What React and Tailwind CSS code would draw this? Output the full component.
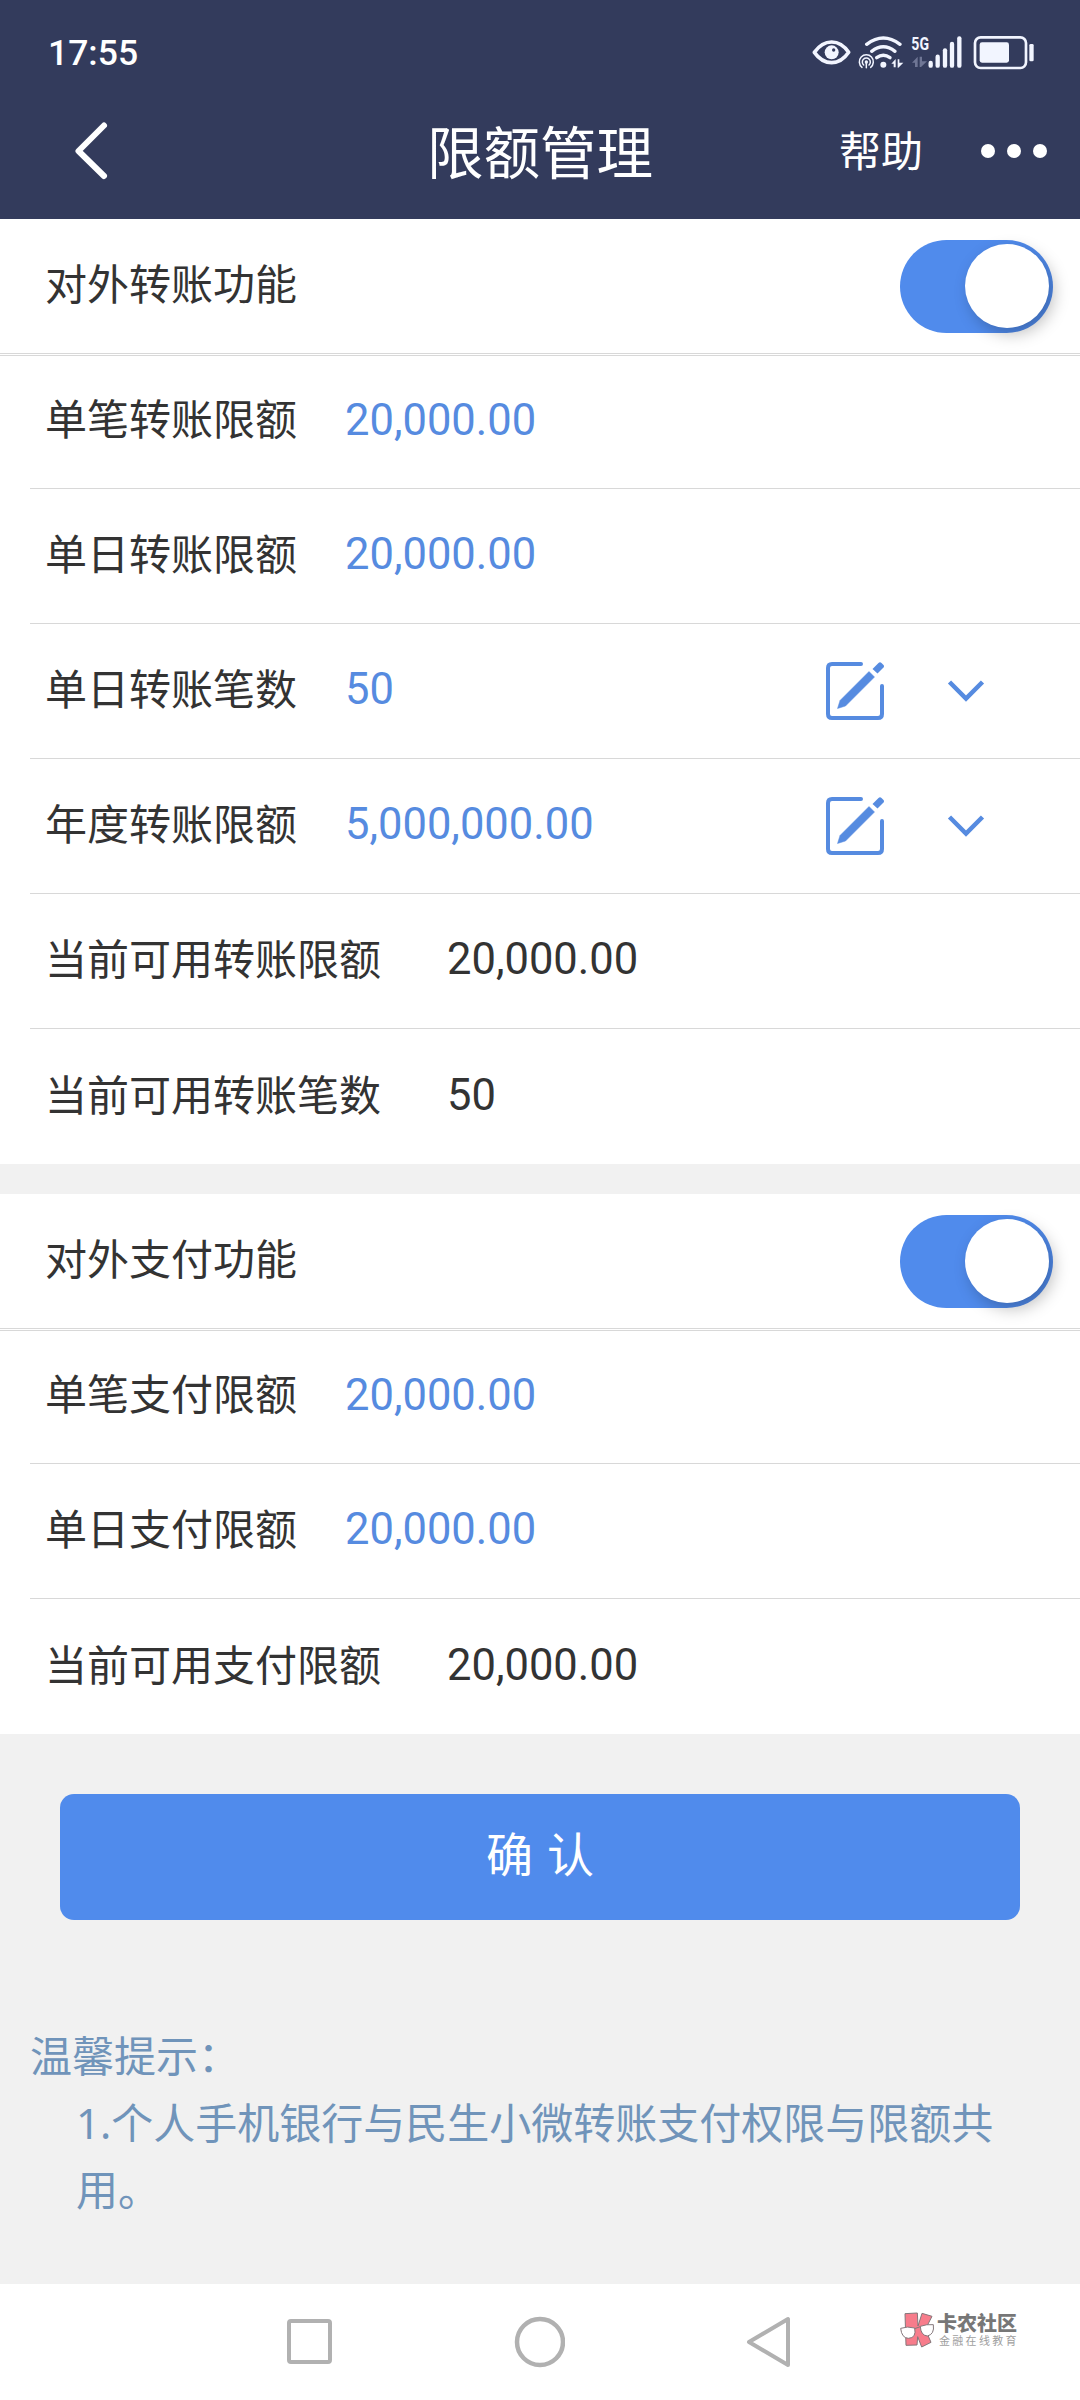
import { useState } from "react";

const transferRows = [
  { label: "单笔转账限额", value: "20,000.00" },
  { label: "单日转账限额", value: "20,000.00" },
  { label: "单日转账笔数", value: "50", editable: true },
  { label: "年度转账限额", value: "5,000,000.00", editable: true },
  { label: "当前可用转账限额", value: "20,000.00", readOnly: true },
  { label: "当前可用转账笔数", value: "50", readOnly: true },
];

const paymentRows = [
  { label: "单笔支付限额", value: "20,000.00" },
  { label: "单日支付限额", value: "20,000.00" },
  { label: "当前可用支付限额", value: "20,000.00", readOnly: true },
];

function StatusIcons() {
  return (
    <svg className="h-10 w-[228px]" viewBox="90 96 684 120" fill="none" stroke="#f2f5ff">
      {/* eye */}
      <path d="M103 157 Q125 126 155 126 Q185 126 206 157 Q185 188 155 188 Q125 188 103 157Z" strokeWidth="11" strokeLinejoin="round" />
      <circle cx="155" cy="157" r="21" fill="#f2f5ff" stroke="none" />
      <circle cx="161" cy="150" r="5" fill="#333b5c" stroke="none" />
      {/* wifi + hotspot */}
      <g strokeLinecap="round" strokeWidth="10">
        <path d="M260 133 Q310 95 360 133" />
        <path d="M275 154 Q310 127 345 154" />
        <path d="M290 173 Q310 158 330 173" />
      </g>
      <circle cx="310" cy="194" r="9" fill="#f2f5ff" stroke="none" />
      <g strokeWidth="4.5" strokeLinecap="round">
        <path d="M246 202 A21 21 0 1 1 272 202" />
        <path d="M251 195 A12 12 0 1 1 267 195" />
        <path d="M259 190 V203" />
      </g>
      <circle cx="259" cy="186" r="5" fill="#f2f5ff" stroke="none" />
      <path d="M334 191 L347 177 V202 H341 V191Z M353 178 H358 V188 H370 L355 203 H353Z" fill="#f2f5ff" stroke="none" />
      {/* mobile signal */}
      <text x="394" y="151" fill="#f2f5ff" stroke="none" fontSize="56" fontWeight="700" textLength="53" lengthAdjust="spacingAndGlyphs" fontFamily="Roboto, sans-serif">5G</text>
      <path d="M396 188 L413 170 V201 H405 V188Z M419 170 H426 V184 H441 L423 201 H419Z" fill="#6f7695" stroke="none" />
      <g strokeWidth="13" strokeLinecap="round">
        <path d="M452 189 V197" />
        <path d="M473 170 V197" />
        <path d="M495 151 V197" />
        <path d="M516 132 V197" />
        <path d="M538 115 V197" />
      </g>
      {/* battery */}
      <rect x="585" y="112" width="153" height="92" rx="17" strokeWidth="8" />
      <rect x="599" y="127" width="88" height="61" rx="7" fill="#f2f5ff" stroke="none" />
      <rect x="748" y="132" width="13" height="52" rx="4" fill="#f2f5ff" stroke="none" />
    </svg>
  );
}

function EditIcon() {
  return (
    <svg className="size-[58px]" viewBox="0 0 58 58" fill="none" stroke="#568be0">
      <path d="M35 2 H6 Q2 2 2 6 V52 Q2 56 6 56 H52 Q56 56 56 52 V24" strokeWidth="4" strokeLinecap="round" />
      <path d="M11.5 46.5 L14 38.5 L43 9.5 L48.5 15 L19.5 44 Z" fill="#568be0" strokeWidth="0.5" />
      <path d="M46.5 7 L52.5 1 Q54 -0.5 55.5 1 L57.5 3 Q58.5 4 57.5 5.5 L51.5 11.5 Z" fill="#568be0" stroke="none" />
    </svg>
  );
}

function ChevronDown() {
  return (
    <svg className="h-6 w-10" viewBox="0 0 40 24" fill="none" stroke="#568be0" strokeWidth="4.5">
      <path d="M3.5 3 L20 19.5 L36.5 3" />
    </svg>
  );
}

function Toggle({ checked, onChange }) {
  return (
    <button
      type="button"
      role="switch"
      aria-checked={checked}
      onClick={onChange}
      className={`flex h-[93px] w-[153px] items-center rounded-full px-1 ${
        checked ? "justify-end bg-[#508bec]" : "justify-start bg-gray-300"
      }`}
    >
      <span className="size-[84px] rounded-full bg-white shadow-[5px_6px_16px_rgba(0,0,0,0.25)]" />
    </button>
  );
}

function Section({ title, rows }) {
  const [enabled, setEnabled] = useState(true);

  return (
    <section className="bg-white">
      <div className="flex h-[137px] items-center justify-between border-b-3 border-double border-[#d8d8d8] pr-[27px] pl-[45px]">
        <span className="-mt-1">{title}</span>
        <Toggle checked={enabled} onChange={() => setEnabled(!enabled)} />
      </div>
      <div className="pl-[30px]">
        {rows.map((row, i) => (
          <div
            key={row.label}
            className={`flex items-center pr-[94px] pl-[15px] ${i === 0 ? "h-[133px]" : "h-[135px]"} ${
              i < rows.length - 1 ? "border-b border-[#d8d8d8]" : ""
            }`}
          >
            <span className={i === 0 ? "-mt-1.5" : "-mt-1"}>{row.label}</span>
            <span
              className={`-mt-0.5 font-[Roboto,sans-serif] text-[43.5px] ${
                row.readOnly ? "ml-[66px]" : "ml-[48px] text-[#568be0]"
              }`}
            >
              {row.value}
            </span>
            {row.editable && (
              <div className="ml-auto flex items-center gap-[62px]">
                <EditIcon />
                <ChevronDown />
              </div>
            )}
          </div>
        ))}
      </div>
    </section>
  );
}

function Watermark() {
  return (
    <div className="absolute top-[28px] left-[900px] flex items-center gap-0.5">
      <svg className="h-9 w-[35px]" viewBox="0 0 105 108" stroke="#85777b" strokeWidth="3">
        <path d="M15 5 L52 3 L54 42 L66 4 L96 13 L76 52 L93 91 L65 105 L53 74 L51 99 L18 100Z" fill="#f77c8b" />
        <path d="M2 49 Q22 42 44 48 Q50 78 25 79 Q5 78 2 49Z" fill="#fff" />
        <path d="M61 43 Q80 36 100 38 Q104 67 82 72 Q62 70 61 43Z" fill="#fff" />
        <path d="M44 50 L61 44" />
      </svg>
      <div className="flex flex-col text-[#777]">
        <span className="text-[20px] leading-[21px] font-black whitespace-nowrap">卡农社区</span>
        <span className="pl-0.5 text-[11px] leading-[13px] tracking-[2.3px] whitespace-nowrap text-[#a0a0a0]">金融在线教育</span>
      </div>
    </div>
  );
}

export default function App() {
  return (
    <div className="flex h-[2400px] w-[1080px] flex-col overflow-hidden bg-[#f1f1f1] font-['Noto_Sans','Noto_Sans_CJK_SC',sans-serif] text-[42px] leading-[67.5px] text-[#333]">
      <header className="h-[219px] bg-[#333b5c] text-white">
        <div className="flex h-[90px] items-center justify-between pt-3.5 pr-[42px] pl-12">
          <span className="mt-[3px] font-[Roboto,sans-serif] text-[35.5px] font-medium">17:55</span>
          <StatusIcons />
        </div>
        <div className="grid h-[122px] grid-cols-3 items-center pr-[33px] pl-[73px]">
          <svg className="h-[60px] w-9" viewBox="0 0 36 60" fill="none" stroke="#fff" strokeWidth="6" strokeLinecap="round" strokeLinejoin="round">
            <path d="M31 4.5 L5.5 30 L31 55" />
          </svg>
          <h1 className="-ml-10 pt-[3px] text-center text-[56.5px] whitespace-nowrap">限额管理</h1>
          <div className="flex items-center justify-end gap-[58px]">
            <span>帮助</span>
            <span className="flex gap-3">
              <i className="size-3.5 rounded-full bg-white" />
              <i className="size-3.5 rounded-full bg-white" />
              <i className="size-3.5 rounded-full bg-white" />
            </span>
          </div>
        </div>
      </header>

      <main className="flex flex-1 flex-col">
        <Section title="对外转账功能" rows={transferRows} />
        <div className="h-[30px]" />
        <Section title="对外支付功能" rows={paymentRows} />

        <button type="button" className="mx-[60px] mt-[60px] h-[126px] rounded-[14px] bg-[#508bec] pb-1 text-[47px] [word-spacing:2px] text-white">
          确 认
        </button>

        <div className="mt-[102px] pl-[30px] text-[#7094ba]">
          <p>温馨提示：</p>
          <p className="-mt-px w-[985px] pl-[46px]">1.个人手机银行与民生小微转账支付权限与限额共用。</p>
        </div>
      </main>

      <nav className="relative h-[116px] bg-white">
        <div className="flex h-full items-center justify-between pr-[287px] pl-[284px]">
          <svg className="size-[52px]" viewBox="0 0 52 52" fill="none" stroke="#b1b1b1" strokeWidth="4">
            <rect x="5" y="5" width="41" height="41" rx="2" />
          </svg>
          <svg className="size-[52px]" viewBox="0 0 52 52" fill="none" stroke="#b1b1b1" strokeWidth="4.5">
            <circle cx="27" cy="26" r="23" />
          </svg>
          <svg className="size-[52px]" viewBox="0 0 52 52" fill="none" stroke="#b1b1b1" strokeWidth="4" strokeLinejoin="round">
            <path d="M8 26 L47 3 V49 Z" />
          </svg>
        </div>
        <Watermark />
      </nav>
    </div>
  );
}
